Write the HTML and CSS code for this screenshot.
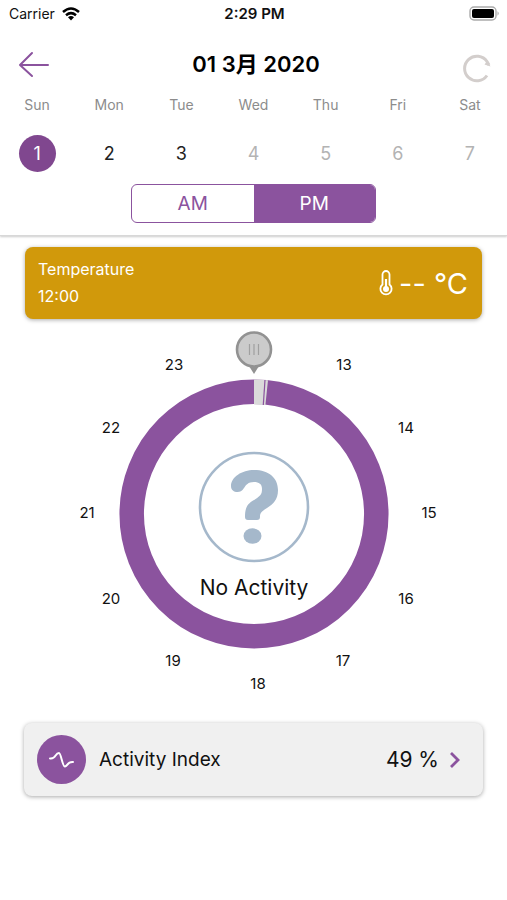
FILE: index.html
```html
<!DOCTYPE html>
<html lang="en">
<head>
<meta charset="utf-8">
<meta name="viewport" content="width=device-width, initial-scale=1">
<title>Daily activity</title>
<link rel="stylesheet" href="styles.css">
</head>
<body>
<header class="top">
  <div class="status">
    <span class="carrier">Carrier
      <svg width="18" height="14" viewBox="0 0 18 14" aria-hidden="true"><g fill="none" stroke="#000" stroke-width="2.5"><path d="M1 5Q9-2 17 5"/><path d="M4 8.2Q9 4 14 8.2"/></g><path d="M6 10.2Q9 8 12 10.2L9 13.5Z"/></svg>
    </span>
    <span class="clock">2:29 PM</span>
    <svg class="battery" width="31" height="15" viewBox="0 0 31 15" aria-hidden="true"><rect x="1" y="1" width="26" height="13" rx="4" fill="#fff" stroke="#aaa" stroke-width="1.4"/><rect x="3" y="3" width="22" height="9" rx="2"/><path d="M28.5 5.3Q31 7.5 28.5 9.7Z" fill="#aaa"/></svg>
  </div>
  <div class="nav">
    <button class="icon-button" aria-label="Back"><svg width="32" height="28" viewBox="0 0 32 28"><path d="M14 3L2 15L14 26M2 15H30" fill="none" stroke="#8b539e" stroke-width="2" stroke-linecap="round" stroke-linejoin="round"/></svg></button>
    <h1>01 3月 2020</h1>
    <button class="icon-button refresh" aria-label="Refresh"><svg width="30" height="30" viewBox="0 0 30 30"><path d="M25 22.500A12.300 12.300 0 1 1 25 8.500L27 12" fill="none" stroke="#d3cecc" stroke-width="3"/><path d="M25.500 7.500L28.500 13.500L22.500 11.500Z" fill="#d3cecc"/></svg></button>
  </div>
  <div class="week names">
    <span>Sun</span><span>Mon</span><span>Tue</span><span>Wed</span><span>Thu</span><span>Fri</span><span>Sat</span>
  </div>
  <div class="week days">
    <button class="day selected">1</button><button class="day">2</button><button class="day">3</button><button class="day" disabled>4</button><button class="day" disabled>5</button><button class="day" disabled>6</button><button class="day" disabled>7</button>
  </div>
  <div class="halves">
    <button class="half">AM</button><button class="half active">PM</button>
  </div>
</header>
<main>
  <section class="card temperature">
    <div class="reading"><span>Temperature</span><span>12:00</span></div>
    <div class="value">
      <svg width="14" height="26" viewBox="0 0 14 26" aria-hidden="true"><path d="M3.500 14.500V4.500a3.500 3.500 0 0 1 7 0v10a5.600 5.600 0 1 1-7 0Z" fill="none" stroke="#fff" stroke-width="1.800"/><circle cx="7" cy="19" r="3" fill="#fff"/><path d="M7 9V18" stroke="#fff" stroke-width="2.200"/></svg>
      <span>-- °C</span>
    </div>
  </section>
  <svg class="dial" width="381" height="375" viewBox="0 0 381 375" role="img" aria-label="Activity from 12:00 to 24:00">
    <circle cx="191" cy="189" r="122.300" fill="none" stroke="#8b539e" stroke-width="24.500"/>
    <path d="M191 54.500A134.500 134.500 0 0 1 205 55.200L202.400 80.100A109.500 109.500 0 0 0 191 79.500Z" fill="#dadada"/>
    <path d="M202 55L200.300 80" stroke="#8b539e" stroke-width="1.200"/>
    <path d="M186 41L191 49L196 41Z" fill="#929292"/>
    <circle cx="191" cy="24.500" r="17" fill="#cbcbcb" stroke="#929292" stroke-width="2.600"/>
    <path d="M186.500 19V30M191 19V30M195.500 19V30" stroke="#a0a0a0" stroke-width="1.200"/>
    <g class="hours">
      <text x="281" y="45">13</text><text x="343" y="108">14</text><text x="366" y="193">15</text><text x="343" y="279">16</text><text x="280" y="341">17</text><text x="195" y="364">18</text><text x="110" y="341">19</text><text x="48" y="279">20</text><text x="24" y="193">21</text><text x="48" y="108">22</text><text x="111" y="45">23</text>
    </g>
    <circle cx="191" cy="182" r="54" fill="none" stroke="#a5b8cb" stroke-width="2.600"/>
    <path d="M168 161C168 152 179 145 191 145C206 145 215 153 215 165C215 175 210 179 204 183C198 187 197 188 197 192Q197 195 194 195H185Q182 195 182 192C182 183 184 179 191 175C197 171 199 170 199 164C199 159 196 157 191 157C185 157 183 160 181 163C179 166 177 167 174.500 167C171 167 168 165 168 161Z" fill="#a5b8cb"/>
    <ellipse cx="189.500" cy="211" rx="9" ry="7.700" fill="#a5b8cb"/>
    <text class="state" x="191" y="270">No Activity</text>
  </svg>
  <a class="card index" href="#activity-index">
    <svg width="49" height="49" viewBox="0 0 49 49" aria-hidden="true"><circle cx="24.500" cy="24.500" r="24.500" fill="#8b539e"/><path d="M13 23.500C19 24.500 18 18 22 18C24 18 25.500 32 28 31.500C31 31 30 26.500 36 27" fill="none" stroke="#fff" stroke-width="2" stroke-linecap="round"/></svg>
    <span class="index-name">Activity Index</span>
    <span class="percent">49 %</span>
    <svg width="12" height="18" viewBox="0 0 12 18" aria-hidden="true"><path d="M2 2L9 9L2 16" fill="none" stroke="#8b539e" stroke-width="2.800"/></svg>
  </a>
</main>
</body>
</html>
```
FILE: styles.css
```css
* { box-sizing: border-box; }
body { margin: 0; background: #fff; color: #111; font-family: Inter, "Noto Sans CJK JP", sans-serif; }
button { font: inherit; color: inherit; border: 0; background: none; padding: 0; }
svg { display: block; flex: none; }

.top { padding-bottom: 12px; border-bottom: 1px solid #d8d8d8; box-shadow: 0 1px 2px #ccc; }
.status { display: grid; grid-template-columns: 1fr auto 1fr; align-items: center; height: 27px; padding: 0 7px 0 9px; font-size: 14px; }
.carrier { display: flex; align-items: center; gap: 7px; }
.clock { font-weight: 600; font-size: 15px; }
.battery { justify-self: end; }

.nav { display: flex; align-items: center; justify-content: space-between; height: 73px; padding: 0 15px 0 18px; }
.nav h1 { margin: 0; font-size: 22px; line-height: 28px; font-weight: 600; color: #000; }
.refresh { padding-top: 8px; }

.week { display: grid; grid-template-columns: repeat(7, 1fr); justify-items: center; padding: 0 1px; }
.names { font-size: 14px; line-height: 20px; color: #8c8c8c; margin-top: -5px; }
.days { margin-top: 20px; }
.day { width: 37px; height: 37px; border-radius: 50%; font-size: 18px; color: #222; }
.day:disabled { color: #b3b3b3; }
.day.selected { background: #80478f; color: #fff; }

.halves { display: flex; width: 245px; height: 39px; margin: 12px auto 0; border: 1px solid #8b539e; border-radius: 6px; overflow: hidden; }
.half { flex: 1; font-size: 19px; color: #8b539e; }
.half.active { background: #8b539e; color: #fff; }

main { padding: 11px 24px; }
.card { display: flex; align-items: center; border-radius: 8px; box-shadow: 0 1px 4px #aaa; }
.temperature { justify-content: space-between; height: 72px; padding: 0 14px 0 13px; margin: 0 1px; background: #d1990b; color: #fff; }
.reading { display: flex; flex-direction: column; font-size: 16px; line-height: 27px; }
.value { display: flex; align-items: center; gap: 6px; font-size: 29px; }

.dial { margin: 6px auto 0; max-width: 100%; }
.hours { font-size: 15px; text-anchor: middle; fill: #111; }
.state { font-size: 21px; text-anchor: middle; fill: #111; }

.index { height: 73px; margin-top: 23px; padding: 0 22px 0 13px; background: #f0f0f0; color: #111; text-decoration: none; }
.index-name { flex: 1; margin-left: 13px; font-size: 19px; }
.percent { margin-right: 10px; font-size: 21px; }
```
